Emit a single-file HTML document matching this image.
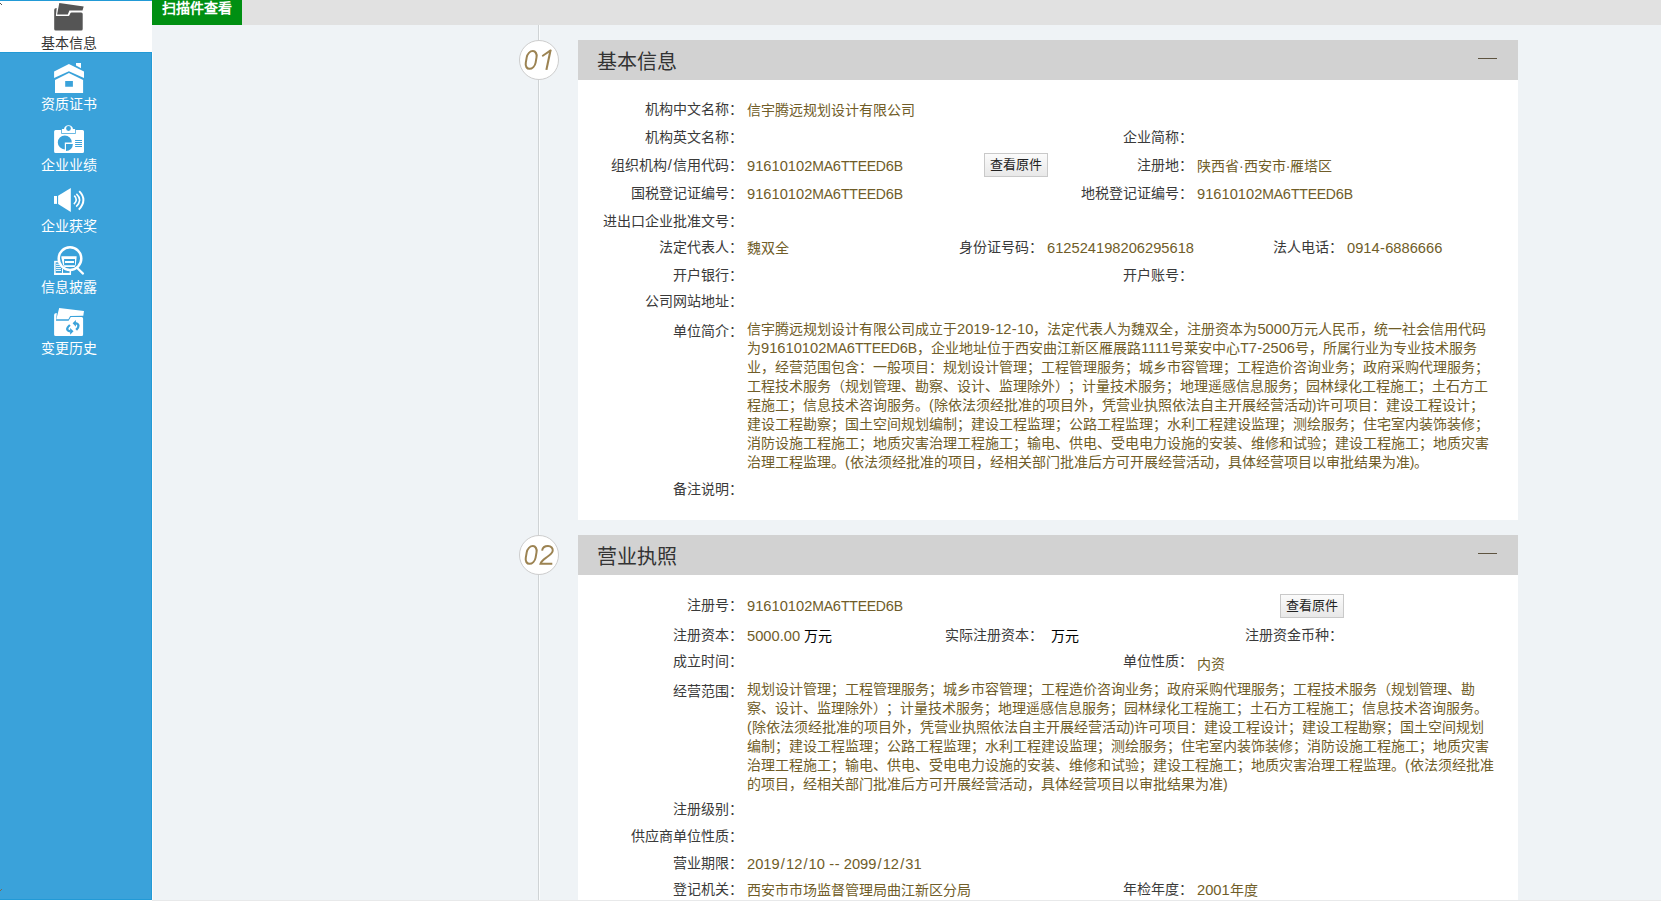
<!DOCTYPE html>
<html lang="zh-CN">
<head>
<meta charset="utf-8">
<title>基本信息</title>
<style>
html,body{margin:0;padding:0;}
body{width:1661px;height:903px;overflow:hidden;position:relative;background:#fff;font-family:"Liberation Sans",sans-serif;font-size:14px;color:#333;}
.abs{position:absolute;}
#side{left:0;top:0;width:151px;height:898px;background:#3aa2da;border-top:1px solid #229ad6;border-right:1px solid #229ad6;border-bottom:1px solid #229ad6;}
#main{left:152px;top:0;width:1509px;height:900px;background:#eff3f6;border-bottom:1px solid #e8e9ea;}
#wcol{left:152px;top:52px;width:1px;height:848px;background:#fdfbfa;}
#topbar{left:152px;top:0;width:1509px;height:25px;background:#e1e1e1;}
#scan{left:152px;top:0;width:90px;height:25px;background:#008f12;color:#fff;font-weight:bold;font-size:14px;line-height:19px;text-align:center;}
#scan span{position:relative;top:-1px;}
.item{position:absolute;left:0;width:138px;text-align:center;color:#fff;font-size:14px;line-height:19px;}
.ic{position:absolute;}
#vline{left:538px;top:25px;width:1px;height:875px;background:#cfd3d5;border-right:1px solid #fafcfd;}
.circ{position:absolute;left:519px;width:38px;height:38px;border:1px solid #cdcdcd;border-radius:50%;background:#fff;}
.circ span{position:absolute;left:4px;top:5px;font-style:italic;font-size:28px;color:#9c8355;line-height:28px;}
.hdr{position:absolute;left:578px;width:940px;height:40px;background:#d2d2d2;}
.hdr .ht{position:absolute;left:19px;top:10px;font-size:20px;line-height:24px;color:#333;}
.hdr .mn{position:absolute;left:900px;top:18px;width:19px;height:1px;background:#5e5440;}
.body{position:absolute;left:578px;width:940px;background:#fff;}
.l{position:absolute;white-space:nowrap;line-height:19px;color:#3a3a3a;}
.v{position:absolute;white-space:nowrap;line-height:19px;color:#705d28;}
.n{font-size:14.7px;line-height:0;}
.u{letter-spacing:-.25px;}
.s{font-size:14.7px;line-height:0;padding:0 1.1px;}
.h{font-size:14.7px;line-height:0;padding:0 .3px;}
.btn{position:absolute;width:62px;height:22px;border:1px solid #c9c9c9;background:linear-gradient(#fbfbfb,#e8e8e8);font-size:13px;line-height:22px;text-align:center;color:#222;}
</style>
</head>
<body>
<div id="main" class="abs"></div>
<div id="topbar" class="abs"></div>
<div id="scan" class="abs"><span>扫描件查看</span></div>

<div id="side" class="abs"></div>
<div class="abs" style="left:0;top:1px;width:152px;height:51px;background:#fff;"></div>
<div class="abs" style="left:0;top:52px;width:152px;height:1px;background:#229ad6;"></div>
<div id="wcol" class="abs"></div>
<svg class="ic" style="left:49px;top:0px" width="40" height="35" viewBox="0 0 40 35"><g fill="#555">
<path d="M10.3,3.1 L34.7,6.4 L33.5,10.5 L20.4,10.5 L18.8,14.6 L8.1,14.6 Z"/>
<path d="M5.2,9.8 Q5.2,8.1 7.7,8.1 L6.9,15.9 L19.6,15.9 Q20.4,15.9 20.8,14.6 L21.2,13.4 Q21.6,12.4 22.6,12.4 L32.2,12.4 Q33.7,12.4 33.7,13.9 L33.7,29.1 Q33.7,30.6 32.2,30.6 L6.7,30.6 Q5.2,30.6 5.2,29.1 Z"/>
</g></svg>
<svg class="ic" style="left:49px;top:58px" width="40" height="40" viewBox="0 0 40 40"><g fill="#fff">
<path d="M19.9,6 L35,13.6 L35,20 L19.9,13.2 L5.1,20 L5.1,13.6 Z"/>
<path d="M27,4.9 L32,4.9 L32,10.2 L27,7.6 Z"/>
<path fill-rule="evenodd" d="M19.9,15.1 L34.1,22 L34.1,35 L6,35 L6,22 Z M16.2,23 L23.9,23 L23.9,28.8 L16.2,28.8 Z"/>
</g></svg>
<svg class="ic" style="left:49px;top:119px" width="40" height="40" viewBox="0 0 40 40">
<path fill="#fff" d="M6.6,10.9 L12.2,10.9 L12.2,14.8 L26.8,14.8 L26.8,10.9 L33.5,10.9 Q35,10.9 35,12.4 L35,32.6 Q35,34.1 33.5,34.1 L6.6,34.1 Q5.1,34.1 5.1,32.6 L5.1,12.4 Q5.1,10.9 6.6,10.9 Z"/>
<path fill="#fff" fill-rule="evenodd" d="M12.9,10 L15,10 A4.6,4.6 0 0 1 24,10 L26.1,10 L26.1,14.1 L12.9,14.1 Z M19.5,7.1 A2.4,2.4 0 1 0 19.5,11.9 A2.4,2.4 0 1 0 19.5,7.1 Z"/>
<path fill="#3aa2da" d="M15.8,23.4 L22.8,23.4 A7,7 0 1 0 15.8,30.4 Z"/>
<path fill="#3aa2da" d="M17,25.1 L23.9,25.1 A6.9,6.9 0 0 1 17,32 Z"/>
<g fill="#3aa2da"><rect x="26.1" y="21" width="6.9" height="1"/><rect x="26.1" y="23" width="6.9" height="1"/><rect x="26.1" y="25" width="6.9" height="1"/><rect x="26.1" y="27" width="6.9" height="1"/></g>
</svg>
<svg class="ic" style="left:49px;top:180px" width="40" height="40" viewBox="0 0 40 40">
<g fill="#fff"><rect x="5" y="16" width="3" height="7.9"/><path d="M9.1,15.8 L21.8,8 L21.8,32 L9.1,24 Z"/></g>
<g fill="none" stroke="#fff" stroke-width="1.6">
<path d="M25.3,15.6 Q29.4,19.9 24.9,24.2"/>
<path d="M27.4,13.9 Q34,20 27.2,26.6"/>
<path d="M30.2,11.2 Q38.8,20 29.8,29.7" stroke-width="1.9"/>
</g></svg>
<svg class="ic" style="left:49px;top:241px" width="40" height="40" viewBox="0 0 40 40">
<g fill="none" stroke="#fff">
<rect x="5.9" y="20.6" width="15.4" height="12.6" stroke-width="1.5"/>
</g>
<g fill="#fff"><rect x="5.1" y="31.9" width="16.8" height="2"/><rect x="13" y="21" width="1" height="12"/>
<rect x="7" y="22.8" width="5" height="1"/><rect x="7" y="24.9" width="5" height="1"/><rect x="7" y="26.9" width="5" height="1"/><rect x="7" y="28.9" width="5" height="1"/></g>
<circle cx="21" cy="17.6" r="12.5" fill="#3aa2da"/>
<circle cx="21" cy="17.6" r="11.3" fill="none" stroke="#fff" stroke-width="2.5"/>
<path d="M28.5,27.2 L34,32.6" stroke="#fff" stroke-width="2.2" stroke-linecap="round"/>
<path fill="#fff" fill-rule="evenodd" d="M12.4,15.2 L27.6,15.2 L27.6,16.5 L26.8,23.8 L25.6,26 L15.6,26 L14.2,24.2 L12.4,17 Z M15.1,18 L26,18 L26,24.3 L15.1,24.3 Z"/>
<rect fill="#fff" x="16" y="20" width="9" height="2"/>
</svg>
<svg class="ic" style="left:49px;top:302px" width="40" height="40" viewBox="0 0 40 40"><g fill="#fff">
<path d="M10.2,6 L35,9.1 L34.3,13.8 L21.2,13.9 L19.4,17.3 L7.3,17.3 Z"/>
<path d="M5.1,12.8 Q5.1,11.1 7.8,11.1 L7,18.7 L19.6,18.7 L21.8,15.1 L32.6,15.1 Q34.1,15.1 34.1,16.6 L34.1,32.4 Q34.1,33.9 32.6,33.9 L6.6,33.9 Q5.1,33.9 5.1,32.4 Z"/>
</g>
<g fill="none" stroke="#3aa2da" stroke-width="2.3">
<path d="M26.3,21.2 Q32.2,22.6 27.2,27.9"/>
<path d="M21.4,29.3 Q15.2,28 20.9,23"/>
</g>
<g fill="#3aa2da">
<path d="M23.6,21.2 L26.9,17.9 L26.9,24.7 Z"/>
<path d="M24.5,29.3 L21.1,25.9 L21.1,32.7 Z"/>
</g></svg>
<div class="item" style="top:34px;color:#333;">基本信息</div>
<div class="item" style="top:95px;">资质证书</div>
<div class="item" style="top:156px;">企业业绩</div>
<div class="item" style="top:217px;">企业获奖</div>
<div class="item" style="top:278px;">信息披露</div>
<div class="item" style="top:339px;">变更历史</div>

<div id="vline" class="abs"></div>

<div class="circ" style="top:40px;"></div><svg class="ic" style="left:519px;top:40px" width="40" height="40" viewBox="0 0 40 40">
<rect x="10.77" y="11.05" width="9.8" height="17.8" rx="4.9" ry="6.2" transform="skewX(-10)" fill="none" stroke="#9c8352" stroke-width="2.0"/>
<path d="M31.5,10.2 L27.4,29.9" stroke="#9c8352" stroke-width="2.1" fill="none"/>
<path d="M31.6,10.4 L23.8,15.7" stroke="#9c8352" stroke-width="1.9" fill="none" stroke-linecap="round"/>
</svg>
<div class="hdr" style="top:40px;"><div class="ht">基本信息</div><div class="mn"></div></div>
<div class="body" style="top:80px;height:440px;"></div>

<div class="circ" style="top:535px;"></div><svg class="ic" style="left:519px;top:535px" width="40" height="40" viewBox="0 0 40 40">
<rect x="10.77" y="11.05" width="9.8" height="17.8" rx="4.9" ry="6.2" transform="skewX(-10)" fill="none" stroke="#9c8352" stroke-width="2.0"/>
<path d="M23.1,15.6 C23.6,12.6 26,11.1 29,11.1 C32.2,11.1 34.1,13.1 33.7,15.9 C33.3,18.7 30.2,20.6 27.2,22.6 C24.2,24.6 22.2,26.5 21.5,28.8 L33.3,28.8" stroke="#9c8352" stroke-width="2.0" fill="none"/>
</svg>
<div class="hdr" style="top:535px;"><div class="ht">营业执照</div><div class="mn"></div></div>
<div class="body" style="top:575px;height:325px;"></div>

<div class="l" style="right:918px;top:100px;">机构中文名称：</div>
<div class="v" style="left:747px;top:101px;">信宇腾远规划设计有限公司</div>
<div class="l" style="right:918px;top:128px;">机构英文名称：</div>
<div class="l" style="right:468px;top:128px;">企业简称：</div>
<div class="l" style="right:918px;top:156px;">组织机构<span class="s">/</span>信用代码：</div>
<div class="v" style="left:747px;top:157px;"><span class="n">91610102</span><span class="u">MA</span><span class="n">6</span><span class="u">TTEED</span><span class="n">6</span><span class="u">B</span></div>
<div class="btn" style="left:984px;top:153px;">查看原件</div>
<div class="l" style="right:468px;top:156px;">注册地：</div>
<div class="v" style="left:1197px;top:157px;">陕西省·西安市·雁塔区</div>
<div class="l" style="right:918px;top:184px;">国税登记证编号：</div>
<div class="v" style="left:747px;top:185px;"><span class="n">91610102</span><span class="u">MA</span><span class="n">6</span><span class="u">TTEED</span><span class="n">6</span><span class="u">B</span></div>
<div class="l" style="right:468px;top:184px;">地税登记证编号：</div>
<div class="v" style="left:1197px;top:185px;"><span class="n">91610102</span><span class="u">MA</span><span class="n">6</span><span class="u">TTEED</span><span class="n">6</span><span class="u">B</span></div>
<div class="l" style="right:918px;top:212px;">进出口企业批准文号：</div>
<div class="l" style="right:918px;top:238px;">法定代表人：</div>
<div class="v" style="left:747px;top:239px;">魏双全</div>
<div class="l" style="right:618px;top:238px;">身份证号码：</div>
<div class="v" style="left:1047px;top:239px;"><span class="n">612524198206295618</span></div>
<div class="l" style="right:318px;top:238px;">法人电话：</div>
<div class="v" style="left:1347px;top:239px;"><span class="n">0914</span><span class="h">-</span><span class="n">6886666</span></div>
<div class="l" style="right:918px;top:266px;">开户银行：</div>
<div class="l" style="right:468px;top:266px;">开户账号：</div>
<div class="l" style="right:918px;top:292px;">公司网站地址：</div>
<div class="l" style="right:918px;top:322px;">单位简介：</div>
<div class="v" style="left:747px;top:320px;">信宇腾远规划设计有限公司成立于<span class="n">2019</span><span class="h">-</span><span class="n">12</span><span class="h">-</span><span class="n">10</span>，法定代表人为魏双全，注册资本为<span class="n">5000</span>万元人民币，统一社会信用代码<br>为<span class="n">91610102</span><span class="u">MA</span><span class="n">6</span><span class="u">TTEED</span><span class="n">6</span><span class="u">B</span>，企业地址位于西安曲江新区雁展路<span class="n">1111</span>号莱安中心<span class="u">T</span><span class="n">7</span><span class="h">-</span><span class="n">2506</span>号，所属行业为专业技术服务<br>业，经营范围包含：一般项目：规划设计管理；工程管理服务；城乡市容管理；工程造价咨询业务；政府采购代理服务；<br>工程技术服务（规划管理、勘察、设计、监理除外）<span style="padding-left:6px"></span>；计量技术服务；地理遥感信息服务；园林绿化工程施工；土石方工<br>程施工；信息技术咨询服务。(除依法须经批准的项目外，凭营业执照依法自主开展经营活动)许可项目：建设工程设计；<br>建设工程勘察；国土空间规划编制；建设工程监理；公路工程监理；水利工程建设监理；测绘服务；住宅室内装饰装修；<br>消防设施工程施工；地质灾害治理工程施工；输电、供电、受电电力设施的安装、维修和试验；建设工程施工；地质灾害<br>治理工程监理。(依法须经批准的项目，经相关部门批准后方可开展经营活动，具体经营项目以审批结果为准)。</div>
<div class="l" style="right:918px;top:480px;">备注说明：</div>
<div class="l" style="right:918px;top:596px;">注册号：</div>
<div class="v" style="left:747px;top:597px;"><span class="n">91610102</span><span class="u">MA</span><span class="n">6</span><span class="u">TTEED</span><span class="n">6</span><span class="u">B</span></div>
<div class="btn" style="left:1280px;top:594px;">查看原件</div>
<div class="l" style="right:918px;top:626px;">注册资本：</div>
<div class="v" style="left:747px;top:627px;"><span class="n">5000.00</span> <span style="color:#000">万元</span></div>
<div class="l" style="right:618px;top:626px;">实际注册资本：</div>
<div class="v" style="left:1051px;top:627px;"><span style="color:#000">万元</span></div>
<div class="l" style="right:318px;top:626px;">注册资金币种：</div>
<div class="l" style="right:918px;top:652px;">成立时间：</div>
<div class="l" style="right:468px;top:652px;">单位性质：</div>
<div class="v" style="left:1197px;top:655px;">内资</div>
<div class="l" style="right:918px;top:682px;">经营范围：</div>
<div class="v" style="left:747px;top:680px;">规划设计管理；工程管理服务；城乡市容管理；工程造价咨询业务；政府采购代理服务；工程技术服务（规划管理、勘<br>察、设计、监理除外）<span style="padding-left:6px"></span>；计量技术服务；地理遥感信息服务；园林绿化工程施工；土石方工程施工；信息技术咨询服务。<br>(除依法须经批准的项目外，凭营业执照依法自主开展经营活动)许可项目：建设工程设计；建设工程勘察；国土空间规划<br>编制；建设工程监理；公路工程监理；水利工程建设监理；测绘服务；住宅室内装饰装修；消防设施工程施工；地质灾害<br>治理工程施工；输电、供电、受电电力设施的安装、维修和试验；建设工程施工；地质灾害治理工程监理。(依法须经批准<br>的项目，经相关部门批准后方可开展经营活动，具体经营项目以审批结果为准)</div>
<div class="l" style="right:918px;top:800px;">注册级别：</div>
<div class="l" style="right:918px;top:827px;">供应商单位性质：</div>
<div class="l" style="right:918px;top:854px;">营业期限：</div>
<div class="v" style="left:747px;top:855px;"><span class="n">2019</span><span class="s">/</span><span class="n">12</span><span class="s">/</span><span class="n">10</span> <span class="h">-</span><span class="h">-</span> <span class="n">2099</span><span class="s">/</span><span class="n">12</span><span class="s">/</span><span class="n">31</span></div>
<div class="l" style="right:918px;top:880px;">登记机关：</div>
<div class="v" style="left:747px;top:881px;">西安市市场监督管理局曲江新区分局</div>
<div class="l" style="right:468px;top:880px;">年检年度：</div>
<div class="v" style="left:1197px;top:881px;"><span class="n">2001</span>年度</div>
<div class="abs" style="left:0;top:3px;width:1px;height:1px;background:#555"></div>
<div class="abs" style="left:1px;top:4px;width:1px;height:1px;background:#555"></div>
<div class="abs" style="left:1px;top:889px;width:1px;height:1px;background:#7a6a5a"></div>
<div class="abs" style="left:0;top:890px;width:1px;height:1px;background:#7a6a5a"></div>
</body>
</html>
